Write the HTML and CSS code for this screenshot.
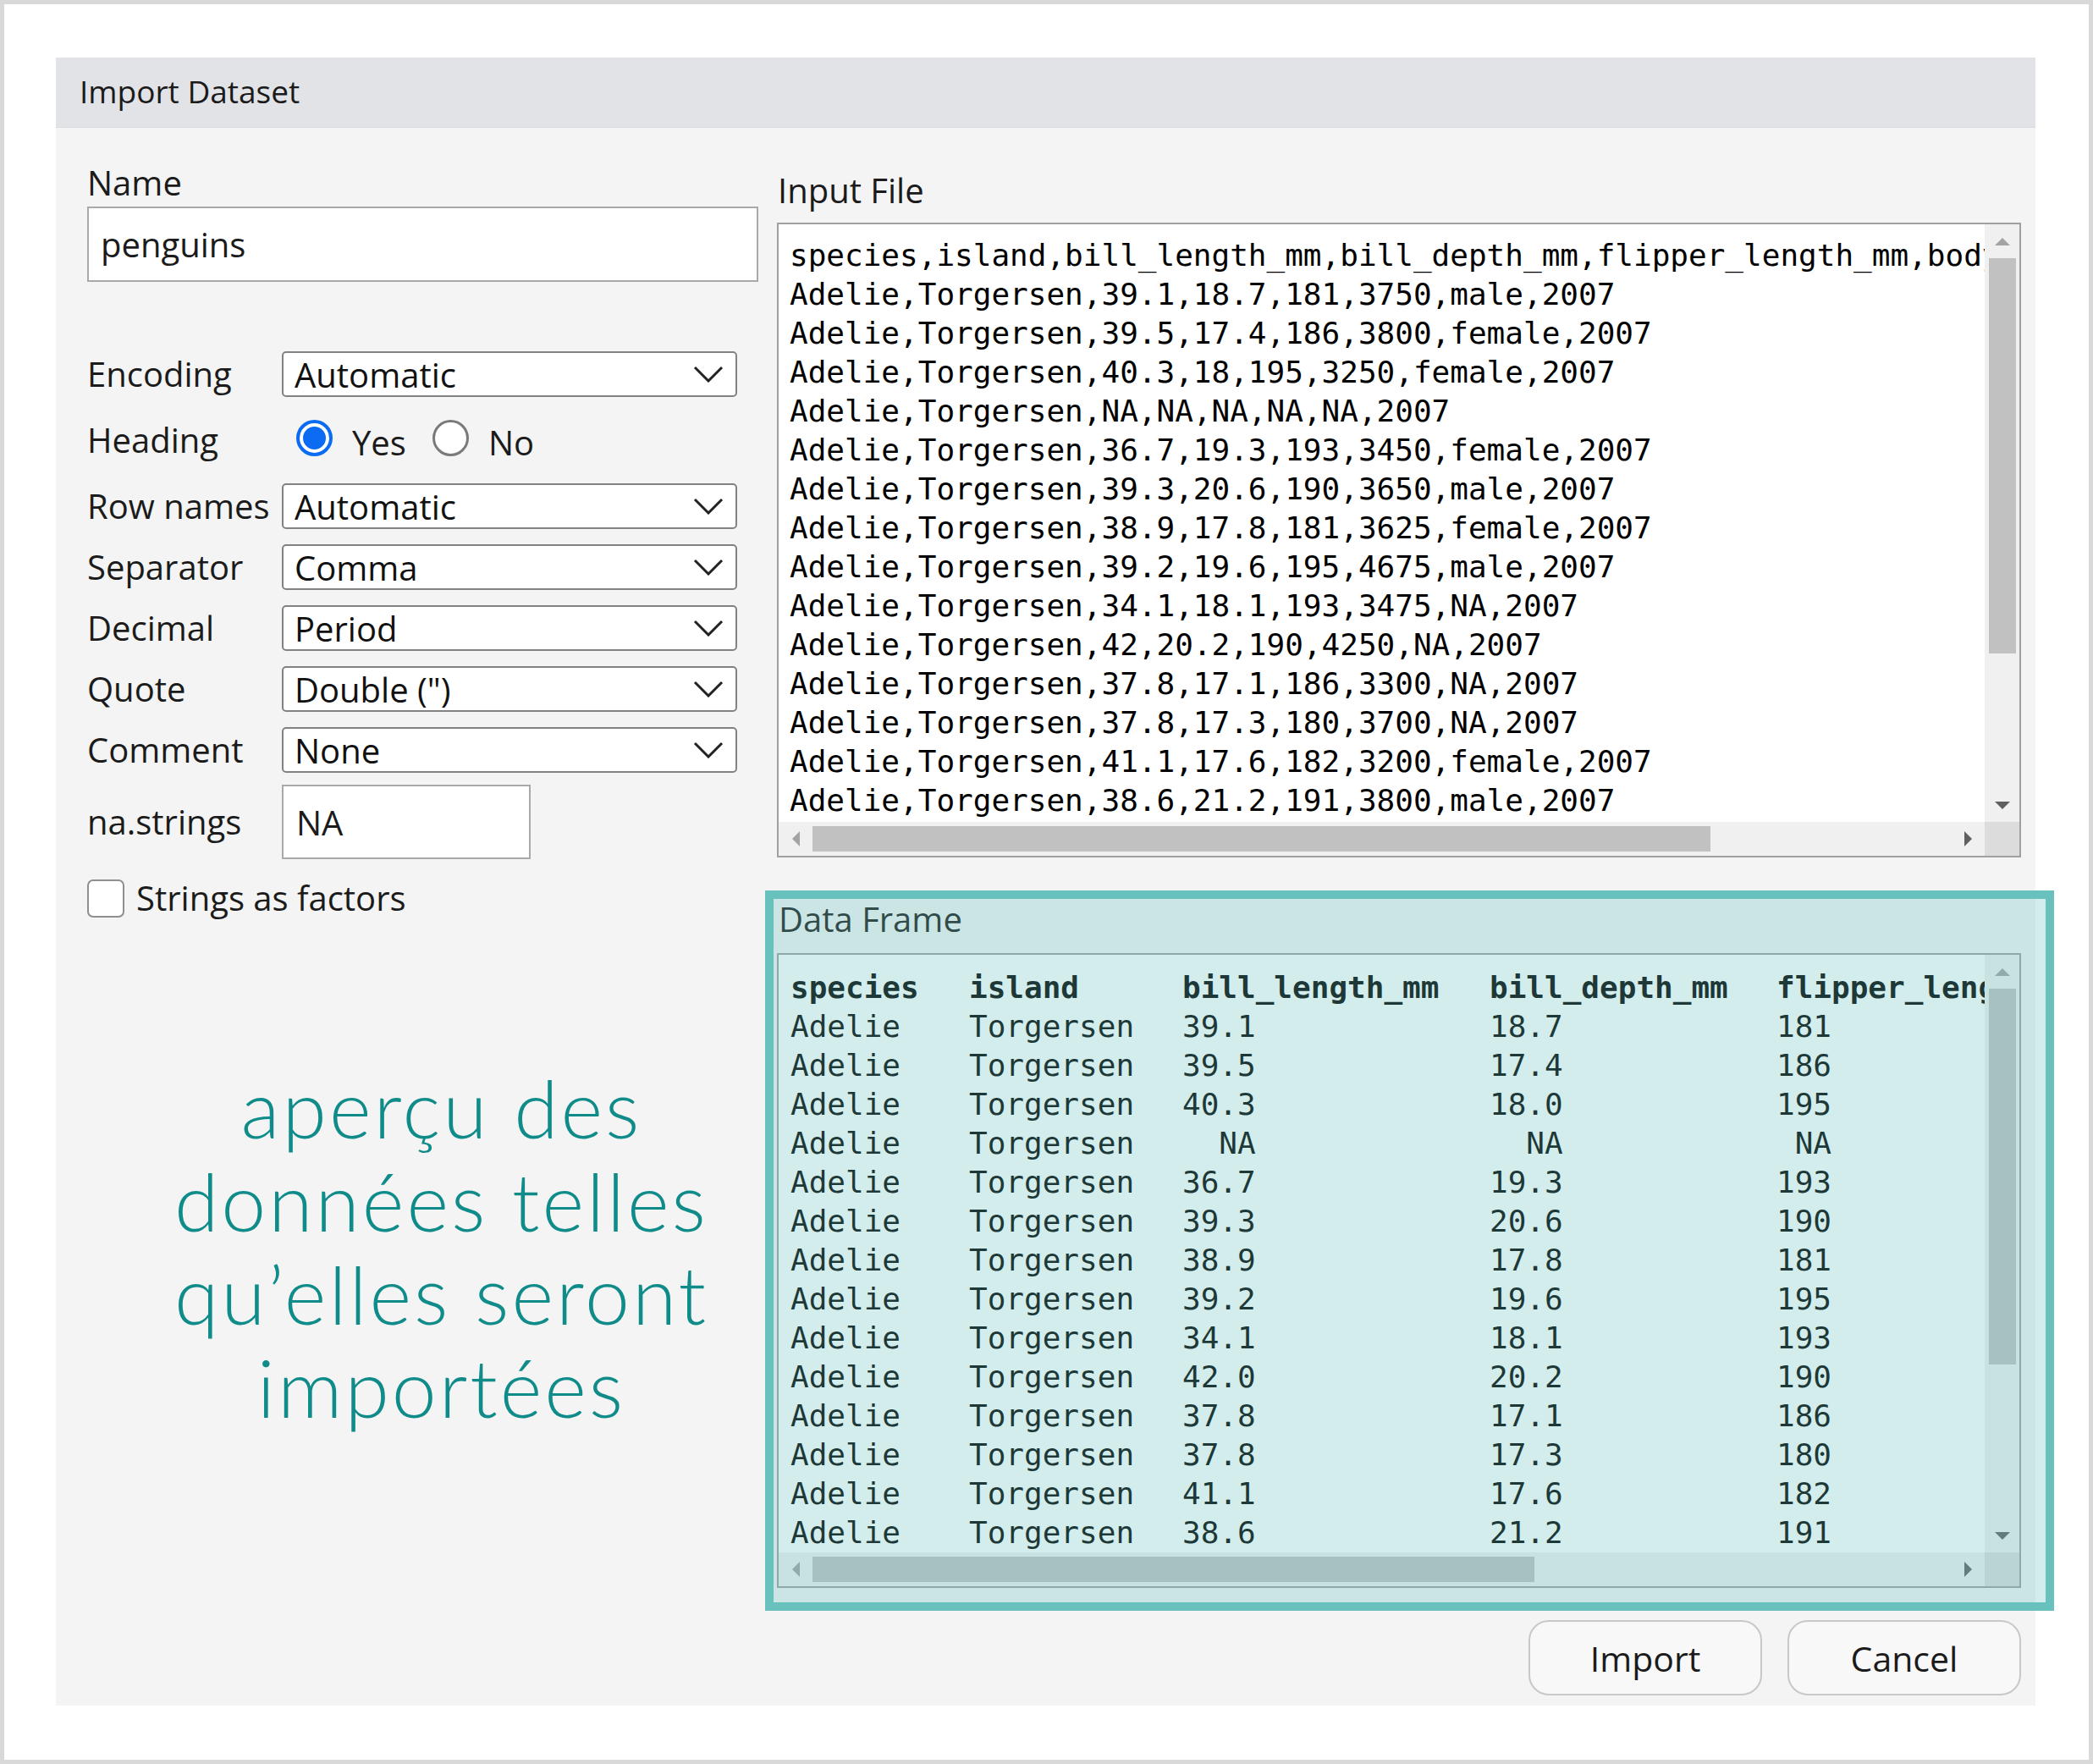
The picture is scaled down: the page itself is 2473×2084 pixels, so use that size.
FILE: index.html
```html
<!DOCTYPE html>
<html lang="fr">
<head>
<meta charset="utf-8">
<title>Import Dataset</title>
<link rel="stylesheet" href="styles.css">
</head>
<body>
<div class="frame">
  <div class="dialog">
    <div class="titlebar">Import Dataset</div>
    <div class="dialog-body">
      <div class="left-col">
        <div class="field-label">Name</div>
        <div class="text-input name-input">penguins</div>

        <div class="form-row first-select">
          <div class="row-label">Encoding</div>
          <div class="select"><span>Automatic</span><svg class="chev" width="36" height="20" viewBox="0 0 36 20"><polyline points="2,2 18,18 34,2" fill="none" stroke="#222" stroke-width="3"/></svg></div>
        </div>

        <div class="form-row heading-row">
          <div class="row-label">Heading</div>
          <div class="radio-group">
            <span class="radio checked"><span class="dot"></span></span><span class="radio-text">Yes</span>
            <span class="radio unchecked"></span><span class="radio-text">No</span>
          </div>
        </div>

        <div class="form-row">
          <div class="row-label">Row names</div>
          <div class="select"><span>Automatic</span><svg class="chev" width="36" height="20" viewBox="0 0 36 20"><polyline points="2,2 18,18 34,2" fill="none" stroke="#222" stroke-width="3"/></svg></div>
        </div>
        <div class="form-row gap-row">
          <div class="row-label">Separator</div>
          <div class="select"><span>Comma</span><svg class="chev" width="36" height="20" viewBox="0 0 36 20"><polyline points="2,2 18,18 34,2" fill="none" stroke="#222" stroke-width="3"/></svg></div>
        </div>
        <div class="form-row gap-row">
          <div class="row-label">Decimal</div>
          <div class="select"><span>Period</span><svg class="chev" width="36" height="20" viewBox="0 0 36 20"><polyline points="2,2 18,18 34,2" fill="none" stroke="#222" stroke-width="3"/></svg></div>
        </div>
        <div class="form-row gap-row">
          <div class="row-label">Quote</div>
          <div class="select"><span>Double (")</span><svg class="chev" width="36" height="20" viewBox="0 0 36 20"><polyline points="2,2 18,18 34,2" fill="none" stroke="#222" stroke-width="3"/></svg></div>
        </div>
        <div class="form-row gap-row">
          <div class="row-label">Comment</div>
          <div class="select"><span>None</span><svg class="chev" width="36" height="20" viewBox="0 0 36 20"><polyline points="2,2 18,18 34,2" fill="none" stroke="#222" stroke-width="3"/></svg></div>
        </div>
        <div class="form-row na-row">
          <div class="row-label">na.strings</div>
          <div class="text-input na-input">NA</div>
        </div>
        <div class="check-row">
          <span class="checkbox"></span><span class="check-text">Strings as factors</span>
        </div>

        <div class="annotation">aperçu des<br>données telles<br>qu’elles seront<br>importées</div>
      </div>

      <div class="right-col">
        <div class="field-label section-label">Input File</div>
        <div class="box">
          <div class="box-content file-content">species,island,bill_length_mm,bill_depth_mm,flipper_length_mm,body_mass_g,sex,year
Adelie,Torgersen,39.1,18.7,181,3750,male,2007
Adelie,Torgersen,39.5,17.4,186,3800,female,2007
Adelie,Torgersen,40.3,18,195,3250,female,2007
Adelie,Torgersen,NA,NA,NA,NA,NA,2007
Adelie,Torgersen,36.7,19.3,193,3450,female,2007
Adelie,Torgersen,39.3,20.6,190,3650,male,2007
Adelie,Torgersen,38.9,17.8,181,3625,female,2007
Adelie,Torgersen,39.2,19.6,195,4675,male,2007
Adelie,Torgersen,34.1,18.1,193,3475,NA,2007
Adelie,Torgersen,42,20.2,190,4250,NA,2007
Adelie,Torgersen,37.8,17.1,186,3300,NA,2007
Adelie,Torgersen,37.8,17.3,180,3700,NA,2007
Adelie,Torgersen,41.1,17.6,182,3200,female,2007
Adelie,Torgersen,38.6,21.2,191,3800,male,2007</div>
          <div class="vscroll">
            <div class="sb-btn"><span class="tri-up"></span></div>
            <div class="vthumb" style="height:467px"></div>
            <div class="sb-fill"></div>
            <div class="sb-btn"><span class="tri-down"></span></div>
          </div>
          <div class="hscroll">
            <div class="sb-btn-h"><span class="tri-left"></span></div>
            <div class="hthumb" style="width:1061px"></div>
            <div class="sb-fill"></div>
            <div class="sb-btn-h"><span class="tri-right"></span></div>
          </div>
          <div class="corner"></div>
        </div>

        <div class="field-label section-label df-label">Data Frame</div>
        <div class="box">
          <div class="box-content df-content">
            <div class="df-row df-head"><span>species</span><span>island</span><span>bill_length_mm</span><span>bill_depth_mm</span><span>flipper_length_mm</span></div>
            <div class="df-row"><span>Adelie</span><span>Torgersen</span><span>39.1</span><span>18.7</span><span>181</span></div>
            <div class="df-row"><span>Adelie</span><span>Torgersen</span><span>39.5</span><span>17.4</span><span>186</span></div>
            <div class="df-row"><span>Adelie</span><span>Torgersen</span><span>40.3</span><span>18.0</span><span>195</span></div>
            <div class="df-row"><span>Adelie</span><span>Torgersen</span><span>  NA</span><span>  NA</span><span> NA</span></div>
            <div class="df-row"><span>Adelie</span><span>Torgersen</span><span>36.7</span><span>19.3</span><span>193</span></div>
            <div class="df-row"><span>Adelie</span><span>Torgersen</span><span>39.3</span><span>20.6</span><span>190</span></div>
            <div class="df-row"><span>Adelie</span><span>Torgersen</span><span>38.9</span><span>17.8</span><span>181</span></div>
            <div class="df-row"><span>Adelie</span><span>Torgersen</span><span>39.2</span><span>19.6</span><span>195</span></div>
            <div class="df-row"><span>Adelie</span><span>Torgersen</span><span>34.1</span><span>18.1</span><span>193</span></div>
            <div class="df-row"><span>Adelie</span><span>Torgersen</span><span>42.0</span><span>20.2</span><span>190</span></div>
            <div class="df-row"><span>Adelie</span><span>Torgersen</span><span>37.8</span><span>17.1</span><span>186</span></div>
            <div class="df-row"><span>Adelie</span><span>Torgersen</span><span>37.8</span><span>17.3</span><span>180</span></div>
            <div class="df-row"><span>Adelie</span><span>Torgersen</span><span>41.1</span><span>17.6</span><span>182</span></div>
            <div class="df-row"><span>Adelie</span><span>Torgersen</span><span>38.6</span><span>21.2</span><span>191</span></div>
          </div>
          <div class="vscroll">
            <div class="sb-btn"><span class="tri-up"></span></div>
            <div class="vthumb" style="height:444px"></div>
            <div class="sb-fill"></div>
            <div class="sb-btn"><span class="tri-down"></span></div>
          </div>
          <div class="hscroll">
            <div class="sb-btn-h"><span class="tri-left"></span></div>
            <div class="hthumb" style="width:853px"></div>
            <div class="sb-fill"></div>
            <div class="sb-btn-h"><span class="tri-right"></span></div>
          </div>
          <div class="corner"></div>
        </div>

        <div class="buttons">
          <div class="btn">Import</div>
          <div class="btn">Cancel</div>
        </div>
      </div>
    </div>
  </div>
  <div class="highlight"></div>
</div>
</body>
</html>
```

FILE: styles.css
```css
* { box-sizing: border-box; }

html, body {
  margin: 0;
  padding: 0;
  background: #ffffff;
}

body {
  font-family: "Open Sans", "Noto Sans", sans-serif;
  color: #1b1b1b;
}

.frame {
  position: relative;
  width: 2473px;
  height: 2084px;
  border: 5px solid #d9d9d9;
  background: #ffffff;
  padding: 63px 0 0 61px;
}

.dialog {
  width: 2339px;
  height: 1947px;
  background: #f3f4f3;
  display: flex;
  flex-direction: column;
}

.titlebar {
  height: 83px;
  flex: none;
  background: #e2e3e6;
  border-bottom: 1px solid #dadbde;
  font-size: 37px;
  line-height: 80px;
  padding-left: 28px;
  color: #1b1b1b;
}

.dialog-body {
  flex: 1;
  display: flex;
  gap: 22px;
  padding: 0 17px 0 37px;
}

.left-col {
  width: 793px;
  flex: none;
  display: flex;
  flex-direction: column;
}

.right-col {
  width: 1470px;
  flex: none;
  display: flex;
  flex-direction: column;
}

.field-label {
  font-size: 40px;
  line-height: 48px;
  height: 48px;
  margin-top: 41px;
}

.text-input {
  background: #ffffff;
  border: 2px solid #a9a9a9;
  font-size: 40px;
  display: flex;
  align-items: center;
  padding-left: 14px;
}

.name-input {
  margin-top: 4px;
  height: 89px;
  width: 793px;
}

.form-row {
  display: flex;
  align-items: center;
  height: 54px;
}

.first-select { margin-top: 82px; }
.gap-row { margin-top: 18px; }

.row-label {
  width: 230px;
  flex: none;
  font-size: 40px;
  line-height: 48px;
  white-space: nowrap;
}

.select {
  width: 538px;
  height: 54px;
  background: #ffffff;
  border: 2px solid #828282;
  border-radius: 5px;
  display: flex;
  align-items: center;
  justify-content: space-between;
  padding: 0 14px 0 13px;
  font-size: 40px;
  color: #111;
}

.chev { display: block; }

.heading-row {
  height: 102px;
}

.radio-group {
  display: flex;
  align-items: center;
  padding-left: 17px;
  margin-top: -6px;
}

.radio {
  width: 43px;
  height: 43px;
  border-radius: 50%;
  flex: none;
  display: flex;
  align-items: center;
  justify-content: center;
  background: #ffffff;
}

.radio.checked {
  border: 4px solid #0b6cf3;
}

.radio.checked .dot {
  width: 27px;
  height: 27px;
  border-radius: 50%;
  background: #0b6cf3;
}

.radio.unchecked {
  border: 3px solid #7a7a7a;
}

.radio-text {
  font-size: 40px;
  line-height: 48px;
  margin-left: 23px;
  margin-right: 31px;
  padding-top: 12px;
}

.na-row {
  height: 88px;
  margin-top: 14px;
}

.na-input {
  width: 294px;
  height: 88px;
  padding-left: 15px;
}

.check-row {
  display: flex;
  align-items: center;
  height: 46px;
  margin-top: 23px;
}

.checkbox {
  width: 44px;
  height: 45px;
  border: 2px solid #8f8f8f;
  border-radius: 7px;
  background: #ffffff;
  flex: none;
}

.check-text {
  font-size: 40px;
  line-height: 48px;
  margin-left: 14px;
}

.annotation {
  margin-top: 169px;
  padding-left: 44px;
  text-align: center;
  font-family: "Lato", sans-serif;
  font-weight: 300;
  font-size: 95px;
  line-height: 110px;
  color: #0f8b8a;
  letter-spacing: 3px;
  white-space: nowrap;
}

.section-label {
  margin-top: 50px;
  padding-left: 1px;
}

.df-label {
  margin-top: 49px;
  padding-left: 2px;
}

.right-col .box { margin-top: 14px; }
.right-col .df-label + .box { margin-top: 16px; }

.box {
  width: 1470px;
  height: 750px;
  border: 2px solid #a0a0a0;
  background: #ffffff;
  display: grid;
  grid-template-columns: 1fr 41px;
  grid-template-rows: 1fr 40px;
}

.box-content {
  overflow: hidden;
  padding: 14px 0 0 13px;
  font-family: "DejaVu Sans Mono", "Liberation Mono", monospace;
  font-size: 36px;
  line-height: 46px;
  color: #000;
}

.file-content {
  white-space: pre;
}

.df-content {
  padding-top: 16px;
  padding-left: 14px;
  white-space: normal;
}

.df-row {
  display: grid;
  grid-template-columns: 211px 252px 363px 339px 400px;
  height: 46px;
}

.df-row span {
  white-space: pre;
}

.df-head { font-weight: bold; }

.vscroll {
  background: #f0f0f0;
  display: flex;
  flex-direction: column;
}

.sb-btn {
  height: 40px;
  flex: none;
  display: flex;
  align-items: center;
  justify-content: center;
}

.sb-btn-h {
  width: 40px;
  flex: none;
  display: flex;
  align-items: center;
  justify-content: center;
}

.sb-fill { flex: 1; }

.vthumb {
  flex: none;
  margin: 0 4px 0 5px;
  background: #c1c1c1;
}

.hscroll {
  background: #f0f0f0;
  display: flex;
  align-items: center;
}

.hthumb {
  flex: none;
  height: 30px;
  background: #c1c1c1;
}

.corner { background: #dcdcdc; }

.tri-up {
  width: 0; height: 0;
  border-left: 9px solid transparent;
  border-right: 9px solid transparent;
  border-bottom: 9px solid #a3a3a3;
}

.tri-down {
  width: 0; height: 0;
  border-left: 9px solid transparent;
  border-right: 9px solid transparent;
  border-top: 9px solid #606060;
}

.tri-left {
  width: 0; height: 0;
  border-top: 9px solid transparent;
  border-bottom: 9px solid transparent;
  border-right: 9px solid #a3a3a3;
}

.tri-right {
  width: 0; height: 0;
  border-top: 9px solid transparent;
  border-bottom: 9px solid transparent;
  border-left: 9px solid #606060;
}

.buttons {
  display: flex;
  justify-content: flex-end;
  gap: 30px;
  margin-top: 38px;
}

.btn {
  width: 276px;
  height: 89px;
  border: 2px solid #c8c8c8;
  border-radius: 24px;
  background: #f8f8f8;
  font-size: 41px;
  display: flex;
  align-items: center;
  justify-content: center;
  color: #1b1b1b;
}

.highlight {
  position: absolute;
  left: 899px;
  top: 1047px;
  width: 1523px;
  height: 851px;
  border: 10px solid #68c1bd;
  background: rgba(104, 193, 189, 0.29);
  pointer-events: none;
}
```
